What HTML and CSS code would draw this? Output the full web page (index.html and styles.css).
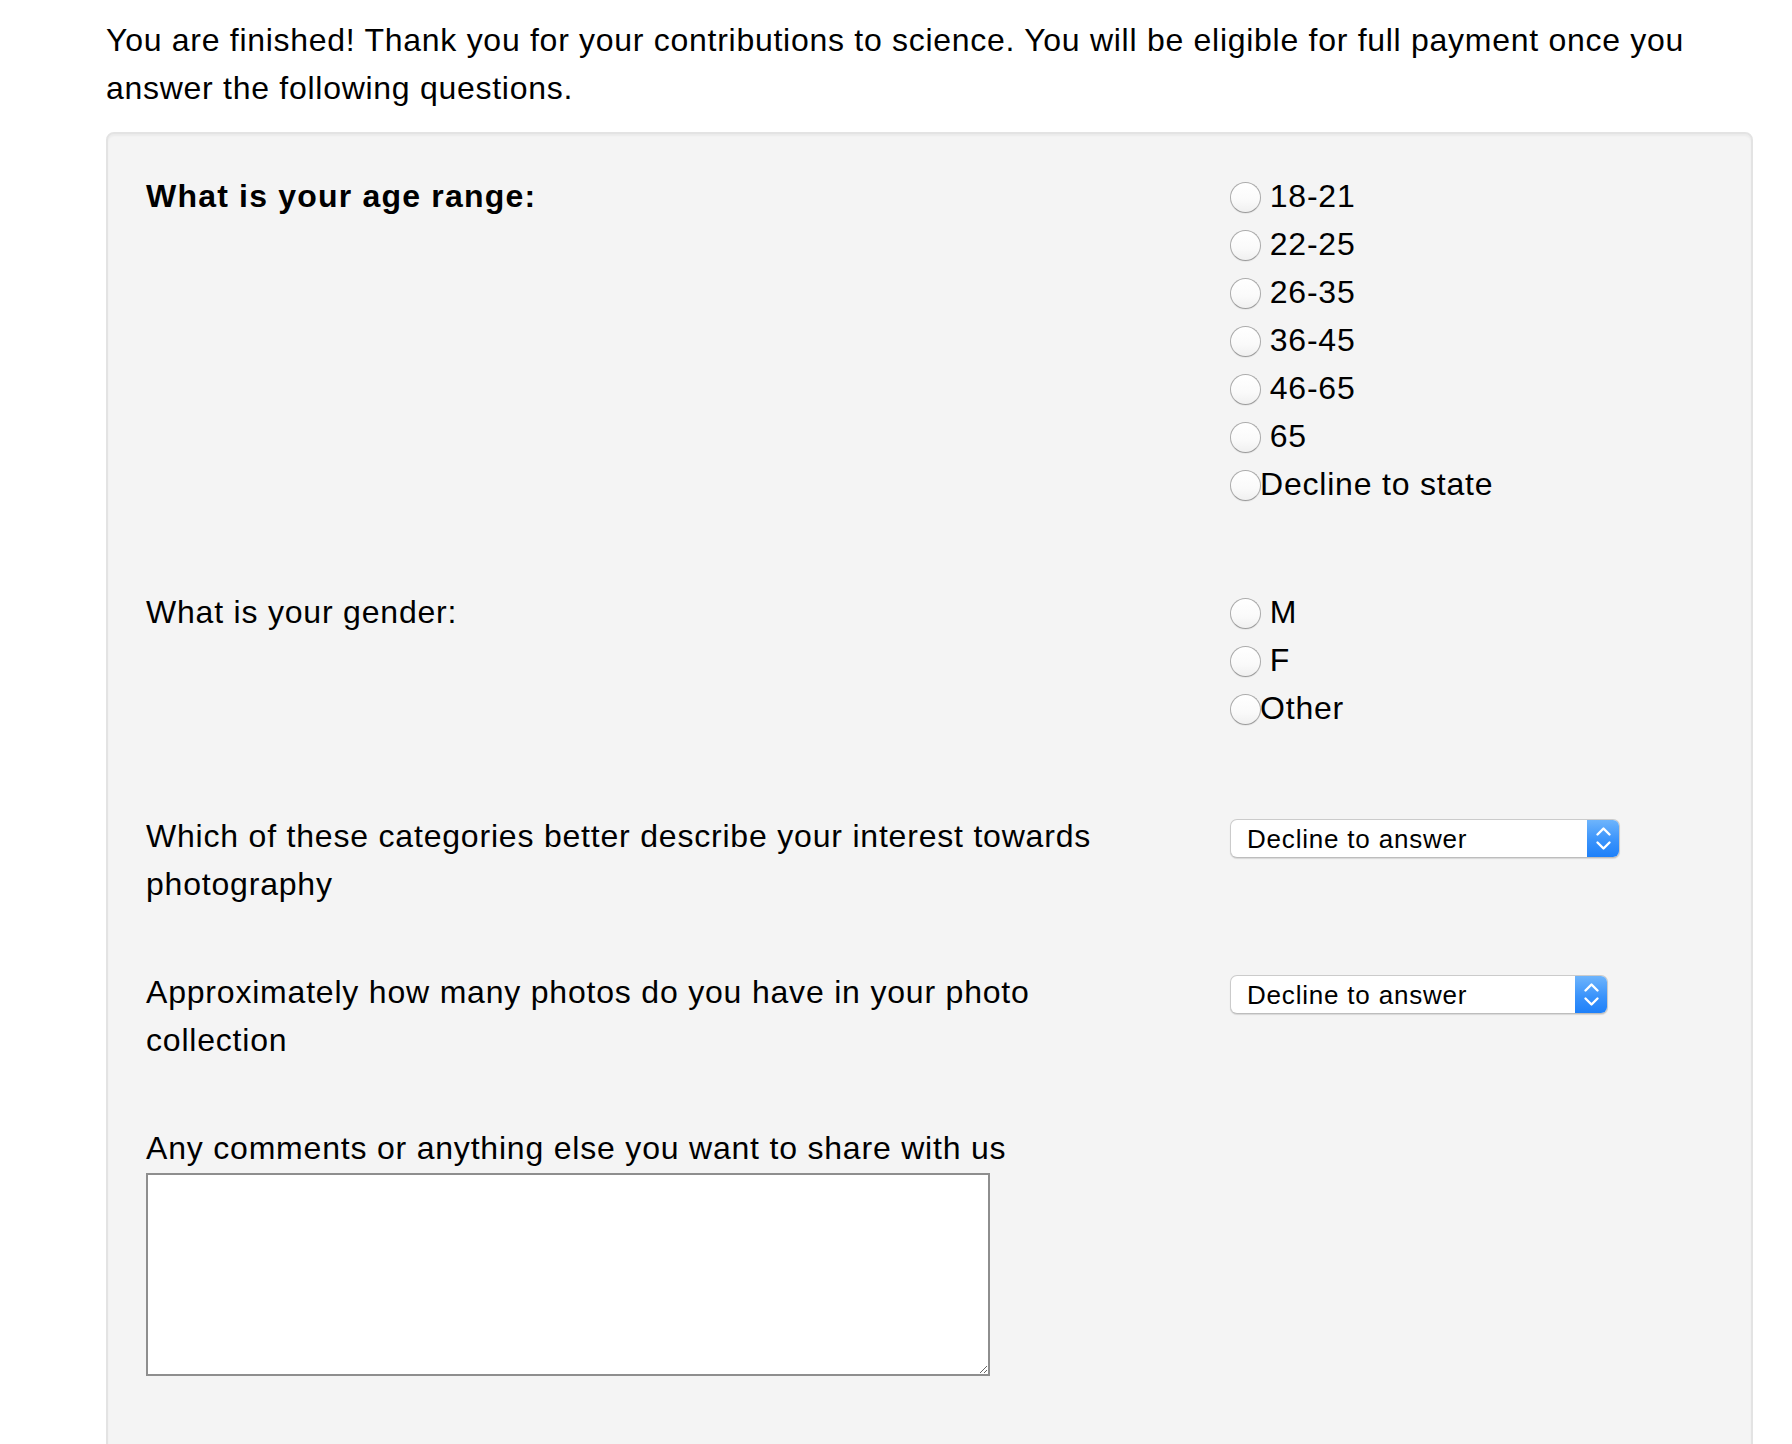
FILE: index.html
```html
<!DOCTYPE html>
<html lang="en">
<head>
<meta charset="utf-8">
<title>Survey</title>
<link rel="stylesheet" href="styles.css">
</head>
<body>
<div class="page">
  <p class="intro">You are finished! Thank you for your contributions to science. You will be eligible for full payment once you answer the following questions.</p>
  <form class="well">
    <div class="q-row">
      <div class="question"><strong class="q-strong">What is your age range:</strong></div>
      <div class="answers radios">
        <label class="opt"><input class="radio" type="radio" name="age"> 18-21</label>
        <label class="opt"><input class="radio" type="radio" name="age"> 22-25</label>
        <label class="opt"><input class="radio" type="radio" name="age"> 26-35</label>
        <label class="opt"><input class="radio" type="radio" name="age"> 36-45</label>
        <label class="opt"><input class="radio" type="radio" name="age"> 46-65</label>
        <label class="opt"><input class="radio" type="radio" name="age"> 65</label>
        <label class="opt"><input class="radio" type="radio" name="age">Decline to state</label>
      </div>
    </div>
    <div class="q-row">
      <div class="question">What is your gender:</div>
      <div class="answers radios">
        <label class="opt"><input class="radio" type="radio" name="gender"> M</label>
        <label class="opt"><input class="radio" type="radio" name="gender"> F</label>
        <label class="opt"><input class="radio" type="radio" name="gender">Other</label>
      </div>
    </div>
    <div class="q-row">
      <div class="question">Which of these categories better describe your interest towards photography</div>
      <div class="answers">
        <div class="select select-wide">
          <span class="select-value">Decline to answer</span>
          <span class="select-arrows"><svg class="chev" viewBox="0 0 33 39" width="33" height="39"><polyline points="10.5,15.5 16.5,9.5 22.5,15.5"/><polyline points="10.5,23.5 16.5,29.5 22.5,23.5"/></svg></span>
        </div>
      </div>
    </div>
    <div class="q-row">
      <div class="question">Approximately how many photos do you have in your photo collection</div>
      <div class="answers">
        <div class="select select-narrow">
          <span class="select-value">Decline to answer</span>
          <span class="select-arrows"><svg class="chev" viewBox="0 0 33 39" width="33" height="39"><polyline points="10.5,15.5 16.5,9.5 22.5,15.5"/><polyline points="10.5,23.5 16.5,29.5 22.5,23.5"/></svg></span>
        </div>
      </div>
    </div>
    <div class="comments">
      <label class="comment-label" for="comments">Any comments or anything else you want to share with us</label>
      <textarea class="comment-box" id="comments"></textarea>
    </div>
  </form>
</div>
</body>
</html>
```
FILE: styles.css
```css
* {
  box-sizing: border-box;
}

html, body {
  margin: 0;
  background: #fff;
}

body {
  font-family: "Liberation Sans", Arial, Helvetica, sans-serif;
  font-size: 32px;
  line-height: 48px;
  letter-spacing: 0.8px;
  color: #000;
}

.page {
  margin: 0 39px 0 106px;
  padding-top: 16px;
}

.intro {
  margin: 0 0 20px;
  letter-spacing: 0.72px;
}

.well {
  display: block;
  margin: 0;
  background: #f4f4f4;
  border: 2px solid #e3e3e3;
  border-radius: 8px;
  box-shadow: inset 0 2px 2px rgba(0, 0, 0, 0.04);
  padding: 38px 38px 80px;
}

.q-row {
  display: grid;
  grid-template-columns: 1084px 1fr;
  margin-bottom: 60px;
}

.question {
  max-width: 1000px;
}

.q-strong {
  font-weight: 700;
  letter-spacing: 1.2px;
}

.radios {
  padding-bottom: 20px;
}

.opt {
  display: block;
  white-space: nowrap;
}

.radio {
  -webkit-appearance: none;
  appearance: none;
  display: inline-block;
  width: 31px;
  height: 31px;
  margin: 0 -1px 0 0;
  padding: 0;
  border: 1px solid #ababab;
  border-bottom-color: #9c9c9c;
  border-radius: 50%;
  background: linear-gradient(#ffffff, #fafafa 60%, #f0f0f0);
  box-shadow: inset 0 1px 1px rgba(255, 255, 255, 0.9), 0 1px 0 rgba(0, 0, 0, 0.05);
  vertical-align: -6px;
}

.select {
  display: flex;
  height: 39px;
  margin-top: 7px;
  background: #fff;
  border: 1px solid #cbcbcb;
  border-bottom-color: #bdbdbd;
  border-radius: 7px;
  box-shadow: 0 1px 1px rgba(0, 0, 0, 0.12);
  overflow: hidden;
  font-size: 26px;
  line-height: 37px;
  letter-spacing: 0.8px;
}

.select-wide {
  width: 390px;
}

.select-narrow {
  width: 378px;
}

.select-value {
  flex: 1;
  padding: 1px 0 0 16px;
}

.select-arrows {
  width: 33px;
  flex: none;
  margin: -1px -1px -1px 0;
  background: linear-gradient(#70b6fc, #3a93fb 55%, #1c7ff9);
  display: flex;
  align-items: center;
  justify-content: center;
}

.chev {
  display: block;
  fill: none;
  stroke: #fff;
  stroke-width: 2.4;
  stroke-linecap: round;
  stroke-linejoin: round;
}

.comment-label {
  display: block;
}

.comment-box {
  display: block;
  width: 844px;
  height: 203px;
  margin: 1px 0 40px;
  padding: 4px;
  border: 2px solid #8e8e8e;
  border-radius: 0;
  background: #fff;
  font: inherit;
  resize: both;
}
```
